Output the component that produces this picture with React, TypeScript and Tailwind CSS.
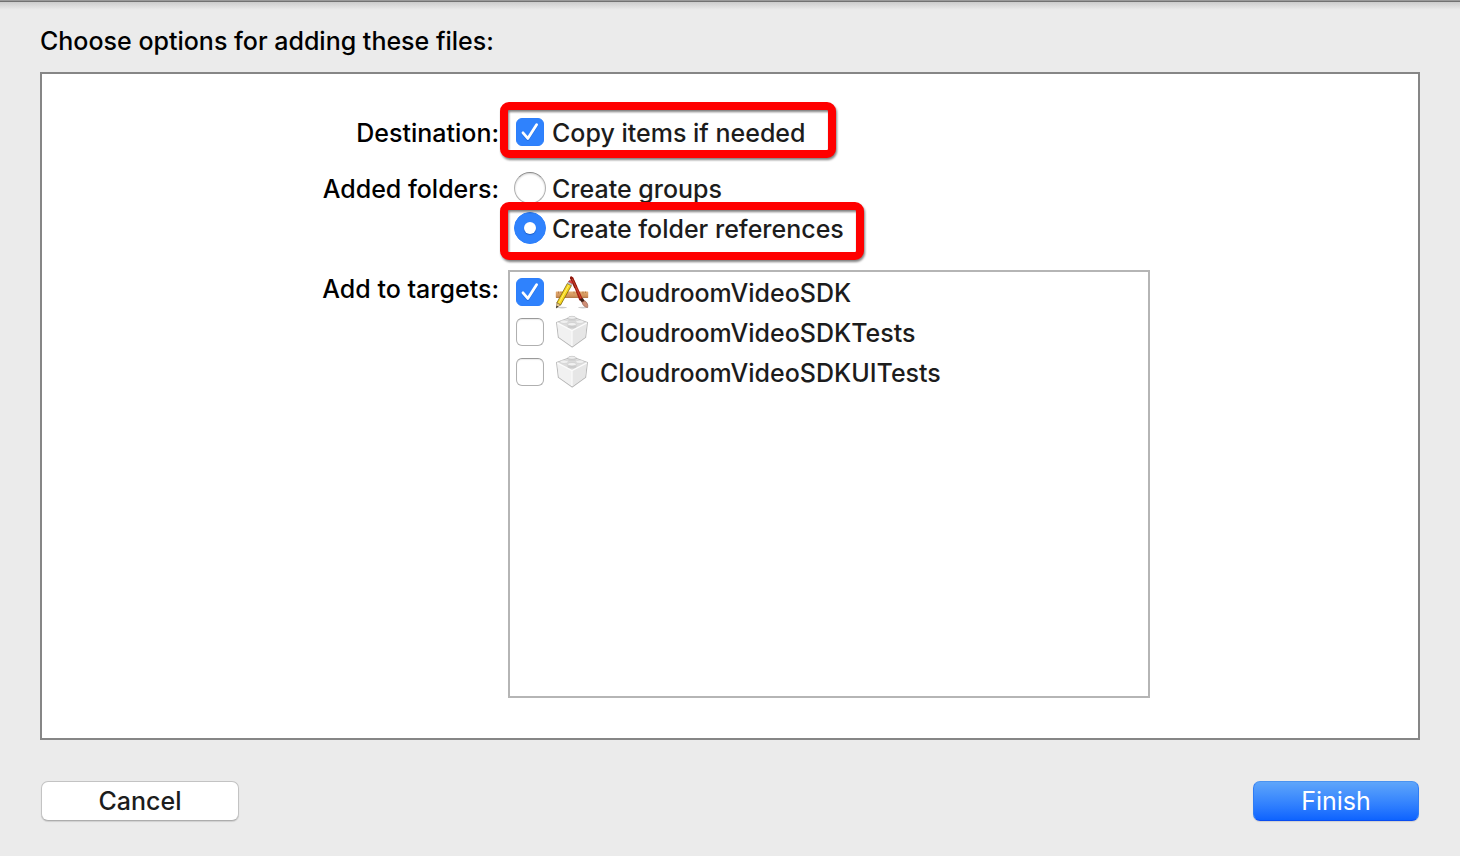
import type { ReactNode } from "react";

function CheckBox({ id, checked }: { id: string; checked?: boolean }) {
  return (
    <span className="grid h-8 w-8 shrink-0 place-items-center">
      <input
        id={id}
        type="checkbox"
        defaultChecked={checked}
        className="peer col-start-1 row-start-1 h-7 w-7 appearance-none rounded-[6px] border border-[#b0b0b0] border-t-[#9a9a9a] bg-white shadow-[inset_0_1px_1px_rgba(0,0,0,0.08)] checked:border-[#2d7ffb] checked:bg-[#2f82fd] checked:shadow-none"
      />
      <svg
        viewBox="0 0 28 28"
        aria-hidden="true"
        className="pointer-events-none col-start-1 row-start-1 hidden h-7 w-7 peer-checked:block"
      >
        <path d="M7 15.8 L11.8 21.6 L20.6 7.8" fill="none" stroke="#1457c4" strokeOpacity="0.45" strokeWidth="2.8" strokeLinecap="round" strokeLinejoin="round" />
        <path d="M7 14.8 L11.8 20.4 L20.6 6.8" fill="none" stroke="#fff" strokeWidth="2.8" strokeLinecap="round" strokeLinejoin="round" />
      </svg>
    </span>
  );
}

function Radio({ id, checked }: { id: string; checked?: boolean }) {
  return (
    <span className="grid h-8 w-8 shrink-0 place-items-center">
      <input
        id={id}
        type="radio"
        name="added-folders"
        defaultChecked={checked}
        className="peer col-start-1 row-start-1 h-8 w-8 appearance-none rounded-full border border-[#b0b0b0] border-t-[#8a8a8a] bg-white shadow-[inset_0_1px_2px_rgba(0,0,0,0.18)] checked:border-[#2d7ffb] checked:bg-[#2f82fd] checked:shadow-none"
      />
      <span className="pointer-events-none col-start-1 row-start-1 hidden h-3 w-3 rounded-full bg-white shadow-[0_1px_1px_rgba(10,60,150,0.5)] peer-checked:block" />
    </span>
  );
}

function Option({ id, control, children, mark }: { id: string; control: ReactNode; children: ReactNode; mark?: string }) {
  return (
    <div className="relative flex h-10 w-fit items-center gap-1.5 pl-1.5 text-[#1c1c1c]">
      {control}
      <label htmlFor={id} className="whitespace-nowrap pt-0.5">{children}</label>
      {mark && (
        <span
          className={`pointer-events-none absolute rounded-[9px] border-8 border-[#ff0000] drop-shadow-[1px_2px_1px_rgba(0,0,0,0.5)] ${mark}`}
        />
      )}
    </div>
  );
}

function AppIcon() {
  return (
    <svg viewBox="0 0 36 36" aria-hidden="true" className="h-9 w-9 shrink-0">
      <defs>
        <linearGradient id="wood" x1="0" y1="0" x2="0" y2="1">
          <stop offset="0" stopColor="#e3ac72" />
          <stop offset="1" stopColor="#c98a52" />
        </linearGradient>
      </defs>
      <ellipse cx="8" cy="33.6" rx="5" ry="0.8" fill="#000" opacity="0.2" />
      <ellipse cx="29" cy="33.6" rx="5" ry="0.8" fill="#000" opacity="0.2" />
      <rect x="1.8" y="17.5" width="32.4" height="6.2" rx="0.5" fill="url(#wood)" />
      <path d="M2 23.4h32" stroke="#a3632f" strokeWidth="0.7" />
      <path d="M4.5 17.5v2M7 17.5v1.5M9.5 17.5v2M20 17.5v2M22.5 17.5v1.5M29 17.5v2M31.5 17.5v1.5" stroke="#99602e" strokeWidth="0.6" />
      <path d="M16.6 3.8 L19 3 L28.8 25 L25.4 26.5 Z" fill="#a72013" />
      <path d="M16 4.3 C15.6 2.4 17.5 1.4 18.6 3.2 L23.2 13 L20.4 14.2 Z" fill="#8e170d" />
      <path d="M18.2 5 L27 24.5" stroke="#e05a3c" strokeWidth="0.7" />
      <path d="M25.3 25.6 L28.8 24 L31 27.4 L28.2 28.8 Z" fill="#3f1d15" />
      <path d="M28 28.2 L30.9 26.8 C33.5 28.8 34.2 31 33.6 33.6 C31 33.2 28.4 31.2 28 28.2Z" fill="#cf8f77" stroke="#8f5442" strokeWidth="0.6" />
      <path d="M13.4 9.4 L17.4 11.6 L6.6 31 L2.8 28.9 Z" fill="#f7d61c" stroke="#7b650b" strokeWidth="0.8" />
      <path d="M14.8 11.2 L4.7 29.3" stroke="#fff27a" strokeWidth="0.9" />
      <path d="M2.8 28.8 L6.5 30.9 L2.4 34 Z" fill="#e8c98f" stroke="#6d5530" strokeWidth="0.5" />
      <path d="M2.6 31.8 L4.2 32.6 L2.2 34.2Z" fill="#222" />
      <path d="M13.5 9.4 L14.5 7.6 L18.4 9.7 L17.4 11.6 Z" fill="#c9c9c9" stroke="#777" strokeWidth="0.4" />
      <path d="M14.5 7.6 C15.5 5 19.4 7 18.4 9.7 Z" fill="#e5433d" stroke="#a4221d" strokeWidth="0.5" />
    </svg>
  );
}

function BrickIcon() {
  return (
    <svg viewBox="0 0 36 36" aria-hidden="true" className="h-9 w-9 shrink-0">
      <path d="M2.6 8.4 L13.5 4.4 H22.5 L33.4 8.4 L31.6 23.4 L18.2 33 L4.4 23.4 Z" fill="#eeeeee" stroke="#b8b8b8" strokeWidth="1.1" strokeLinejoin="round" />
      <path d="M3 8.8 L18 16.6 L18.2 32.4 L4.9 23 Z" fill="#f1f1f1" />
      <path d="M33 8.8 L18 16.6 L18.2 32.4 L31.1 23 Z" fill="#e6e6e6" />
      <path d="M3 8.6 L14 4.8 H22 L33 8.6 L18 16.6 Z" fill="#dcdcdc" />
      <path d="M3.2 8.9 L18 16.6 L32.8 8.9" fill="none" stroke="#fcfcfc" strokeWidth="1.2" />
      <path d="M18 17V32" stroke="#fcfcfc" strokeWidth="1.2" />
      <path d="M14 3.6v2.4c0 1.8 8 1.8 8 0V3.6z" fill="#d2d2d2" />
      <ellipse cx="18" cy="3.8" rx="4" ry="1.5" fill="#ededed" stroke="#b8b8b8" strokeWidth="0.6" />
      <ellipse cx="10.2" cy="7.8" rx="4" ry="1.7" fill="#f0f0f0" stroke="#cacaca" strokeWidth="0.5" />
      <ellipse cx="25.8" cy="7.8" rx="4" ry="1.7" fill="#f0f0f0" stroke="#cacaca" strokeWidth="0.5" />
      <path d="M13.6 10.2v2.6c0 2 8.8 2 8.8 0v-2.6z" fill="#cccccc" />
      <ellipse cx="18" cy="10.2" rx="4.4" ry="1.7" fill="#f2f2f2" stroke="#c0c0c0" strokeWidth="0.5" />
    </svg>
  );
}

const targets = [
  { name: "CloudroomVideoSDK", app: true },
  { name: "CloudroomVideoSDKTests", app: false },
  { name: "CloudroomVideoSDKUITests", app: false },
];

export default function App() {
  return (
    <main className="min-h-screen bg-[#ebebeb] font-['Inter',sans-serif] text-[25px] leading-10 font-medium text-black">
      <div className="h-2.5 border-t border-[#999999] bg-linear-to-b from-[#c8c8c8] to-[#ebebeb]">
        <div className="h-px bg-[#717171]" />
      </div>
      <div className="px-10 pt-[11px]">
        <h1 className="mb-[11px]">Choose options for adding these files:</h1>

        <section className="border-2 border-[#868686] bg-white pt-[38px] pb-10">
          <div className="mx-auto grid max-w-[840px] grid-cols-[189px_1fr] gap-x-[9px]">
            <span className="h-10 pt-px text-right">Destination:</span>
            <Option id="copy" control={<CheckBox id="copy" checked />} mark="-top-2.5 -bottom-1.5 -left-2 w-[336px]">
              Copy items if needed
            </Option>

            <span className="mt-4 h-10 pt-px text-right">Added folders:</span>
            <div className="mt-4" role="radiogroup" aria-label="Added folders">
              <Option id="groups" control={<Radio id="groups" />}>Create groups</Option>
              <Option id="refs" control={<Radio id="refs" checked />} mark="-top-1.5 -bottom-3 -left-2 w-[364px]">
                Create folder references
              </Option>
            </div>

            <span className="mt-5 h-10 pt-px text-right">Add to targets:</span>
            <ul className="mt-[22px] h-[428px] border-2 border-[#b5b5b5] bg-white">
              {targets.map((t) => (
                <li key={t.name} className="flex h-10 items-center pl-1 text-[#1c1c1c]">
                  <CheckBox id={t.name} checked={t.app} />
                  <label htmlFor={t.name} className="flex items-center gap-2.5 pl-2">
                    {t.app ? <AppIcon /> : <BrickIcon />}
                    <span className="pt-0.5">{t.name}</span>
                  </label>
                </li>
              ))}
            </ul>
          </div>
        </section>

        <footer className="flex justify-between px-px pt-[41px] pb-8">
          <button
            type="button"
            className="flex h-10 w-[198px] items-center justify-center rounded-[7px] border border-[#c3c3c3] border-b-[#adadad] bg-white text-[#1c1c1c] shadow-[0_1px_1px_rgba(0,0,0,0.12)]"
          >
            Cancel
          </button>
          <button
            type="button"
            className="flex h-10 w-[166px] items-center justify-center rounded-[7px] border border-t-[#4a93f0] border-x-[#2f7df5] border-b-[#0a4df0] bg-linear-to-b from-[#5ea5fa] to-[#0d63ff] font-normal text-white shadow-[0_1px_1px_rgba(0,0,0,0.12)]"
          >
            Finish
          </button>
        </footer>
      </div>
    </main>
  );
}
